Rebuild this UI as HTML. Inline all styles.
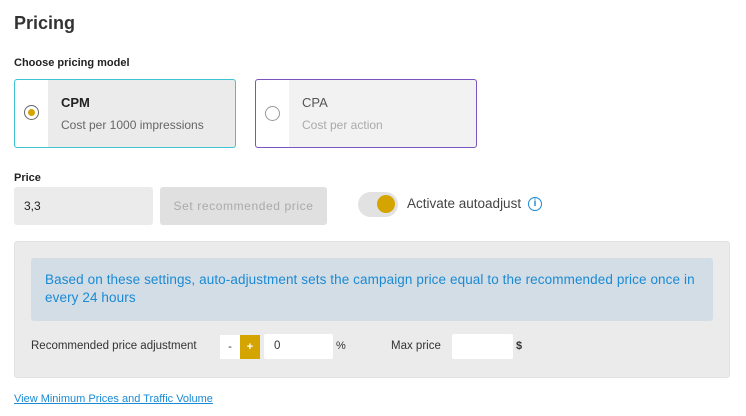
<!DOCTYPE html>
<html><head><meta charset="utf-8"><style>
*{box-sizing:border-box;margin:0;padding:0}
body{width:746px;height:416px;background:#fff;font-family:"Liberation Sans",sans-serif;color:#222;position:relative;overflow:hidden}
.a{position:absolute;white-space:nowrap}
</style></head><body>
<div class="a" style="left:14px;top:13px;font-size:18px;font-weight:bold;color:#333">Pricing</div>
<div class="a" style="left:14px;top:57px;font-size:11px;font-weight:bold;color:#222">Choose pricing model</div>

<div class="a" style="left:14px;top:79px;width:222px;height:69px;border:1px solid #3ec3d3;border-radius:3px;background:#ebebeb">
 <div style="position:absolute;left:0;top:0;width:33px;height:67px;background:#fff;border-radius:3px 0 0 3px"></div>
 <div style="position:absolute;left:9px;top:25px;width:15px;height:15px;border:1.5px solid #666;border-radius:50%"></div>
 <div style="position:absolute;left:13px;top:29px;width:7px;height:7px;background:#d4a500;border-radius:50%"></div>
 <div class="a" style="left:46px;top:15px;font-size:13px;font-weight:bold;color:#222">CPM</div>
 <div class="a" style="left:46px;top:38px;font-size:12px;color:#666">Cost per 1000 impressions</div>
</div>

<div class="a" style="left:255px;top:79px;width:222px;height:69px;border:1px solid #7a55c0;border-radius:3px;background:#f2f2f2">
 <div style="position:absolute;left:0;top:0;width:33px;height:67px;background:#fff;border-radius:3px 0 0 3px"></div>
 <div style="position:absolute;left:9px;top:26px;width:15px;height:15px;border:1px solid #999;border-radius:50%"></div>
 <div class="a" style="left:46px;top:15px;font-size:13px;color:#555">CPA</div>
 <div class="a" style="left:46px;top:38px;font-size:12px;color:#aaa">Cost per action</div>
</div>

<div class="a" style="left:14px;top:172px;font-size:11px;font-weight:bold;color:#222">Price</div>
<div class="a" style="left:14px;top:187px;width:139px;height:38px;background:#ebebeb;border-radius:3px;font-size:12px;padding:12px 10px;color:#222">3,3</div>
<div class="a" style="left:160px;top:187px;width:167px;height:38px;background:#e0e0e0;border-radius:3px;font-size:12px;color:#aaa;letter-spacing:0.6px;text-align:center;line-height:38px">Set recommended price</div>
<div class="a" style="left:358px;top:192px;width:40px;height:25px;background:#e2e2e2;border-radius:13px"></div>
<div class="a" style="left:377px;top:195px;width:18px;height:18px;background:#d4a500;border-radius:50%"></div>
<div class="a" style="left:407px;top:196px;font-size:13.5px;color:#444">Activate autoadjust</div>
<div class="a" style="left:528px;top:197px;width:14px;height:14px;border:1.3px solid #1a8ad4;border-radius:50%;color:#1a8ad4;font-size:10px;line-height:12px;text-align:center;font-weight:bold">i</div>

<div class="a" style="left:14px;top:241px;width:716px;height:137px;background:#ebebeb;border:1px solid #e2e2e2;border-radius:3px"></div>
<div class="a" style="left:31px;top:258px;width:682px;height:63px;background:#d3dde6;border-radius:3px"></div>
<div class="a" style="left:45px;top:271px;font-size:13.5px;color:#1a8ad4;line-height:18px;letter-spacing:0.1px">Based on these settings, auto-adjustment sets the campaign price equal to the recommended price once in<br>every 24 hours</div>

<div class="a" style="left:31px;top:340px;font-size:11.5px;color:#333">Recommended price adjustment</div>
<div class="a" style="left:220px;top:335px;width:20px;height:24px;background:#fff;font-size:11px;text-align:center;line-height:24px;color:#333">-</div>
<div class="a" style="left:240px;top:335px;width:20px;height:24px;background:#d4a500;font-size:11px;text-align:center;line-height:24px;color:#fff;font-weight:bold">+</div>
<div class="a" style="left:264px;top:334px;width:69px;height:25px;background:#fff;border-radius:2px;font-size:11.5px;padding:6px 10px;color:#333">0</div>
<div class="a" style="left:336px;top:340px;font-size:11px;color:#333">%</div>
<div class="a" style="left:391px;top:340px;font-size:11.5px;color:#333">Max price</div>
<div class="a" style="left:452px;top:334px;width:61px;height:25px;background:#fff;border-radius:2px"></div>
<div class="a" style="left:516px;top:340px;font-size:11px;color:#333;font-weight:bold">$</div>

<div class="a" style="left:14px;top:393px;font-size:11px;color:#1a8ad4;text-decoration:underline">View Minimum Prices and Traffic Volume</div>
</body></html>
